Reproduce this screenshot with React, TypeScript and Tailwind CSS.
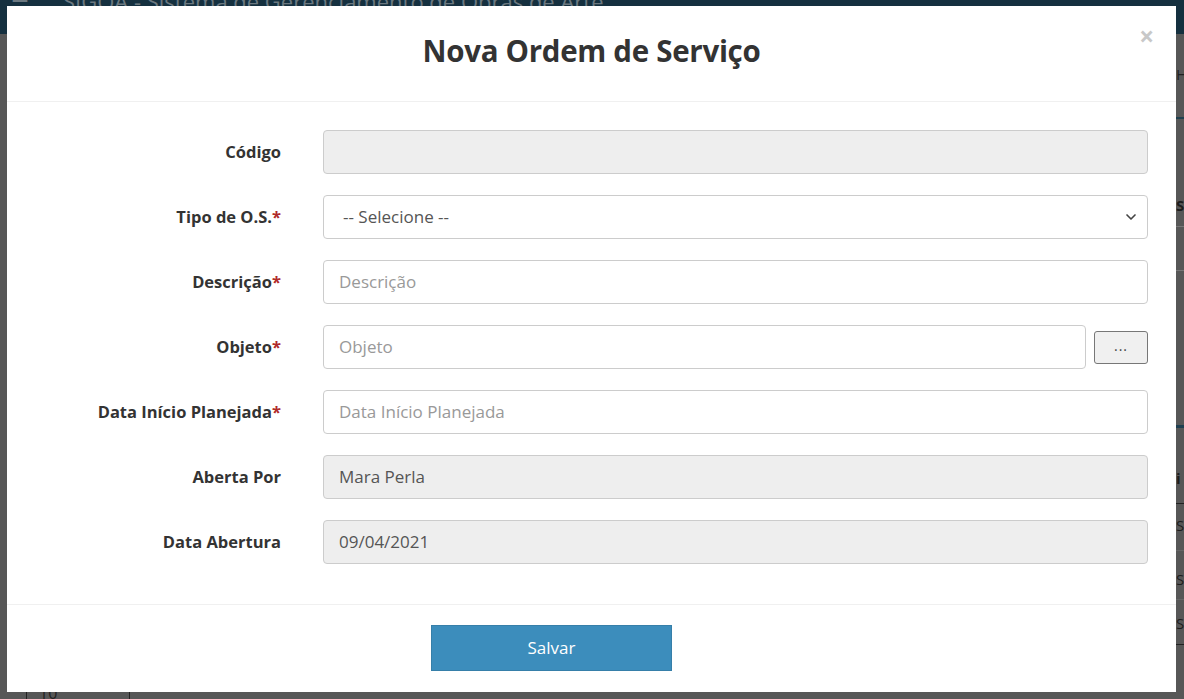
import { ChevronDown } from 'lucide-react';

const font = { fontFamily: '"Source Sans Pro", "Open Sans", Lato, Arial, sans-serif' };

type Field = {
  label: string;
  required?: boolean;
  kind: 'disabled' | 'select' | 'text' | 'object';
  value?: string;
  placeholder?: string;
};

const fields: Field[] = [
  { label: 'Código', kind: 'disabled' },
  { label: 'Tipo de O.S.', required: true, kind: 'select', value: '-- Selecione --' },
  { label: 'Descrição', required: true, kind: 'text', placeholder: 'Descrição' },
  { label: 'Objeto', required: true, kind: 'object', placeholder: 'Objeto' },
  { label: 'Data Início Planejada', required: true, kind: 'text', placeholder: 'Data Início Planejada' },
  { label: 'Aberta Por', kind: 'disabled', value: 'Mara Perla' },
  { label: 'Data Abertura', kind: 'disabled', value: '09/04/2021' },
];

function Control({ f }: { f: Field }) {
  const base = 'h-[44px] rounded-[4px] border border-[#ccc] px-[15px] flex items-center text-[17px]';
  if (f.kind === 'disabled') {
    return <div className={`${base} flex-1 bg-[#eee] text-[#555]`}>{f.value}</div>;
  }
  if (f.kind === 'select') {
    return (
      <div className={`${base} flex-1 bg-white text-[#555] justify-between pr-[8px] pl-[19px]`}>
        <span>{f.value}</span>
        <ChevronDown size={16} strokeWidth={2.5} className="text-[#444]" />
      </div>
    );
  }
  if (f.kind === 'object') {
    return (
      <div className="flex-1 flex items-center gap-[8px]">
        <div className={`${base} flex-1 bg-white text-[#999]`}>{f.placeholder}</div>
        <button className="w-[54px] h-[33px] rounded-[3px] border border-[#777] bg-[#f0f0f0] text-[#444] text-[14px] tracking-[1px] leading-none pb-[2px]">
          ...
        </button>
      </div>
    );
  }
  return <div className={`${base} flex-1 bg-white text-[#999]`}>{f.placeholder}</div>;
}

export default function App() {
  return (
    <div className="relative w-[1184px] h-[699px] overflow-hidden bg-[#575757]" style={font}>
      {/* page behind the overlay */}
      <div className="h-[34px] bg-[#15303f] flex items-start gap-[34px] px-[11px] text-[22px] leading-none text-[#6b7880] overflow-hidden">
        <span className="-mt-[9px] text-[20px]">☰</span>
        <span className="-mt-[10px]">SIGOA - Sistema de Gerenciamento de Obras de Arte</span>
      </div>
      <div className="absolute right-0 top-[34px] w-[8px] h-[665px] flex flex-col text-[#1d1d1d] text-[15px] leading-[20px] overflow-hidden">
        <div className="h-[29px] shrink-0" />
        <div className="h-[22px] shrink-0 leading-[22px] text-[#222]">Ho</div>
        <div className="h-[34px] shrink-0 border-b-[2px] border-[#20404f]" />
        <div className="h-[74px] shrink-0" />
        <div className="h-[24px] shrink-0 leading-[24px] font-bold">S</div>
        <div className="h-[10px] shrink-0 border-b border-[#777]" />
        <div className="h-[44px] shrink-0 border-b border-[#777]" />
        <div className="h-[157px] shrink-0 border-b-[3px] border-[#1f3f50]" />
        <div className="h-[76px] shrink-0 pt-[40px] font-bold border-b border-[#222]">i</div>
        <div className="h-[47px] shrink-0 pt-[11px] border-b border-[#666]">S</div>
        <div className="h-[49px] shrink-0 pt-[18px] border-b border-[#666]">S</div>
        <div className="h-[45px] shrink-0 pt-[13px] border-b border-[#222]">S</div>
      </div>
      <div className="absolute left-[26px] top-[683px] w-[104px] h-[30px] border border-[#222] text-[#222] text-[16px] leading-none pl-[12px] pt-[1px]">
        10
      </div>

      {/* modal */}
      <div className="absolute left-[7px] top-[6px] w-[1169px] h-[686px] bg-white flex flex-col">
        <div className="h-[96px] relative flex items-center justify-center pb-[4px] border-b border-[#f0f0f0]">
          <h1 className="text-[29.5px] font-bold text-[#333] tracking-[-0.3px]">Nova Ordem de Serviço</h1>
          <span className="absolute right-[22px] top-[17px] text-[26px] font-bold text-[#c8c8c8] leading-none">×</span>
        </div>
        <div className="flex flex-col gap-[21px] pt-[28px] pb-[40px] pr-[28px] border-b border-[#f0f0f0]">
          {fields.map((f) => (
            <div key={f.label} className="flex items-center">
              <div className="w-[274px] text-right text-[16.5px] font-bold text-[#333]">
                {f.label}
                {f.required && <span className="text-[#b02a2a]">*</span>}
              </div>
              <div className="w-[42px]" />
              <Control f={f} />
            </div>
          ))}
        </div>
        <div className="flex-1 flex items-start pt-[20px] pl-[424px]">
          <button className="w-[241px] h-[46px] bg-[#3c8dbc] border border-[#367fa9] text-white text-[17px]">
            Salvar
          </button>
        </div>
      </div>
    </div>
  );
}
